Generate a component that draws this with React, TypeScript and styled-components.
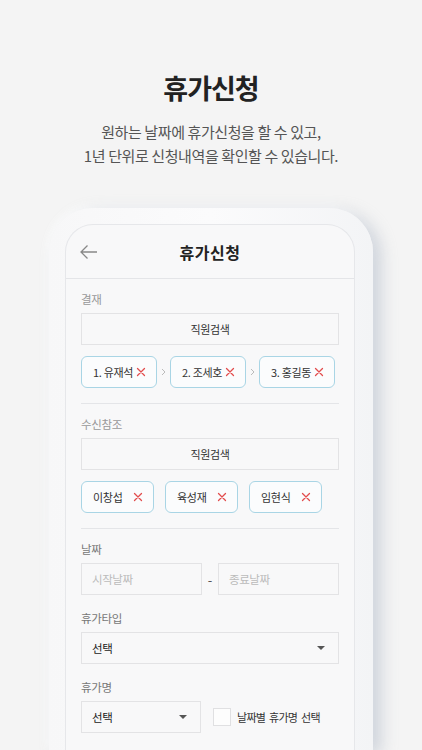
import React from 'react'
import styled, { createGlobalStyle } from 'styled-components'

const GlobalStyle = createGlobalStyle`
  html, body {
    margin: 0;
    padding: 0;
    background: #f4f4f4;
  }
  body {
    font-family: 'Noto Sans CJK KR', 'Noto Sans', sans-serif;
    color: #222;
  }
  *, *::before, *::after {
    box-sizing: border-box;
  }
`

const Page = styled.div`
  width: 422px;
  height: 750px;
  overflow: hidden;
  display: flex;
  flex-direction: column;
  align-items: center;
  background: #f4f4f4;
`

const Hero = styled.header`
  display: flex;
  flex-direction: column;
  align-items: center;
  padding-top: 66px;
`

const Title = styled.h1`
  margin: 0;
  font-size: 27px;
  line-height: 44px;
  font-weight: 700;
  letter-spacing: -1px;
  color: #222;
`

const Subtitle = styled.p`
  margin: 10px 0 0;
  font-size: 15px;
  line-height: 24px;
  color: #555;
  text-align: center;
  letter-spacing: -0.4px;
`

const PhoneFrame = styled.div`
  margin-top: 40px;
  width: 324px;
  flex: 1;
  padding: 16px 18px 0 16px;
  border-radius: 44px 44px 0 0;
  background: linear-gradient(90deg, #f7f7f8 0%, #fbfbfc 50%, #f3f4f6 100%);
  box-shadow: 8px 4px 16px rgba(160, 170, 188, 0.45), -2px -2px 8px rgba(255, 255, 255, 0.9);
  display: flex;
`

const Screen = styled.div`
  flex: 1;
  border: 1px solid #e6e7ea;
  border-bottom: none;
  border-radius: 28px 28px 0 0;
  background: #f8f8f9;
  display: flex;
  flex-direction: column;
`

const NavBar = styled.div`
  position: relative;
  height: 54px;
  display: flex;
  align-items: center;
  justify-content: center;
  border-bottom: 1px solid #e4e5e8;
`

const BackButton = styled.button`
  position: absolute;
  left: 14px;
  top: 19px;
  padding: 0;
  border: none;
  background: none;
  width: 18px;
  height: 16px;
  display: flex;
`

const NavTitle = styled.h2`
  margin: 0;
  font-size: 16px;
  font-weight: 700;
  letter-spacing: 0.5px;
  color: #222;
`

const Form = styled.div`
  padding: 0 15px;
  display: flex;
  flex-direction: column;
`

const Section = styled.section<{ $divider?: boolean }>`
  display: flex;
  flex-direction: column;
  padding: 11px 0 15px;
  border-bottom: ${({ $divider }) => ($divider ? '1px solid #e4e5e8' : 'none')};
`

const Field = styled.div`
  display: flex;
  flex-direction: column;
  margin-top: 14px;
  &:first-child {
    margin-top: 0;
  }
`

const Label = styled.div<{ $strong?: boolean }>`
  font-size: 11.5px;
  line-height: 18px;
  letter-spacing: -0.3px;
  color: ${({ $strong }) => ($strong ? '#777' : '#999')};
  margin-bottom: 5px;
`

const SearchBox = styled.div`
  height: 32px;
  border: 1px solid #e3e3e5;
  background: #f8f8f9;
  display: flex;
  align-items: center;
  justify-content: center;
  font-size: 11px;
  letter-spacing: -0.4px;
  color: #333;
`

const ChipRow = styled.div<{ $gap: number }>`
  display: flex;
  align-items: center;
  gap: ${({ $gap }) => $gap}px;
  margin-top: 11px;
`

const Chip = styled.div<{ $width: number }>`
  width: ${({ $width }) => $width}px;
  height: 32px;
  border: 1px solid #a9d5e5;
  border-radius: 6px;
  background: #fbfcfd;
  display: flex;
  align-items: center;
  justify-content: space-between;
  padding: 0 10px 0 11px;
  font-size: 11px;
  letter-spacing: -0.3px;
  white-space: nowrap;
  color: #333;
`

const Arrow = styled.span`
  width: 5px;
  display: flex;
  justify-content: center;
`

const DateRow = styled.div`
  display: flex;
  align-items: center;
`

const TextBox = styled.div`
  flex: 1;
  height: 32px;
  border: 1px solid #e3e3e5;
  background: #f8f8f9;
  display: flex;
  align-items: center;
  padding: 0 10px;
  font-size: 11.5px;
  letter-spacing: -0.4px;
  color: #bbb;
`

const Dash = styled.span`
  width: 16px;
  text-align: center;
  font-size: 13px;
  color: #555;
`

const Select = styled.div<{ $width?: number }>`
  ${({ $width }) => ($width ? `width: ${$width}px;` : '')}
  height: 32px;
  border: 1px solid #e3e3e5;
  background: #f8f8f9;
  display: flex;
  align-items: center;
  justify-content: space-between;
  padding: 0 13px 0 10px;
  font-size: 11.5px;
  letter-spacing: -0.3px;
  color: #222;
`

const NameRow = styled.div`
  display: flex;
  align-items: center;
`

const CheckLabel = styled.label`
  margin-left: 12px;
  display: flex;
  align-items: center;
  gap: 6px;
  font-size: 11px;
  letter-spacing: -0.7px;
  word-spacing: 2px;
  white-space: nowrap;
  color: #333;
`

const CheckBox = styled.span`
  width: 18px;
  height: 18px;
  border: 1px solid #e0e0e2;
  background: #fdfdfd;
`

const CloseIcon = () => (
  <svg width="10" height="10" viewBox="0 0 10 10">
    <path d="M1.5 1.5 L8.5 8.5 M8.5 1.5 L1.5 8.5" stroke="#e24d4d" strokeWidth="1.3" strokeLinecap="round" />
  </svg>
)

const ChevronIcon = () => (
  <svg width="5" height="8" viewBox="0 0 5 8">
    <path d="M1 1 L4 4 L1 7" stroke="#bbb" strokeWidth="1" fill="none" />
  </svg>
)

const CaretIcon = () => (
  <svg width="8" height="4" viewBox="0 0 8 4">
    <path d="M0 0 H8 L4 4 Z" fill="#555" />
  </svg>
)

const approvers = ['1. 유재석', '2. 조세호', '3. 홍길동']
const refs = ['이창섭', '육성재', '임현식']

const App: React.FC = () => (
  <Page>
    <GlobalStyle />
    <Hero>
      <Title>휴가신청</Title>
      <Subtitle>
        원하는 날짜에 휴가신청을 할 수 있고,
        <br />
        1년 단위로 신청내역을 확인할 수 있습니다.
      </Subtitle>
    </Hero>
    <PhoneFrame>
      <Screen>
        <NavBar>
          <BackButton aria-label="back">
            <svg width="18" height="16" viewBox="0 0 18 16">
              <path d="M1 8 H17 M7.5 1.5 L1 8 L7.5 14.5" stroke="#888" strokeWidth="1.3" fill="none" />
            </svg>
          </BackButton>
          <NavTitle>휴가신청</NavTitle>
        </NavBar>
        <Form>
          <Section $divider>
            <Label>결재</Label>
            <SearchBox>직원검색</SearchBox>
            <ChipRow $gap={4}>
              {approvers.map((name, i) => (
                <React.Fragment key={name}>
                  {i > 0 && (
                    <Arrow>
                      <ChevronIcon />
                    </Arrow>
                  )}
                  <Chip $width={76}>
                    {name}
                    <CloseIcon />
                  </Chip>
                </React.Fragment>
              ))}
            </ChipRow>
          </Section>
          <Section $divider>
            <Label>수신참조</Label>
            <SearchBox>직원검색</SearchBox>
            <ChipRow $gap={11}>
              {refs.map((name) => (
                <Chip key={name} $width={73}>
                  {name}
                  <CloseIcon />
                </Chip>
              ))}
            </ChipRow>
          </Section>
          <Section>
            <Field>
              <Label $strong>날짜</Label>
              <DateRow>
                <TextBox>시작날짜</TextBox>
                <Dash>-</Dash>
                <TextBox>종료날짜</TextBox>
              </DateRow>
            </Field>
            <Field>
              <Label $strong>휴가타입</Label>
              <Select>
                선택
                <CaretIcon />
              </Select>
            </Field>
            <Field>
              <Label $strong>휴가명</Label>
              <NameRow>
                <Select $width={120}>
                  선택
                  <CaretIcon />
                </Select>
                <CheckLabel>
                  <CheckBox />
                  날짜별 휴가명 선택
                </CheckLabel>
              </NameRow>
            </Field>
          </Section>
        </Form>
      </Screen>
    </PhoneFrame>
  </Page>
)

export default App
